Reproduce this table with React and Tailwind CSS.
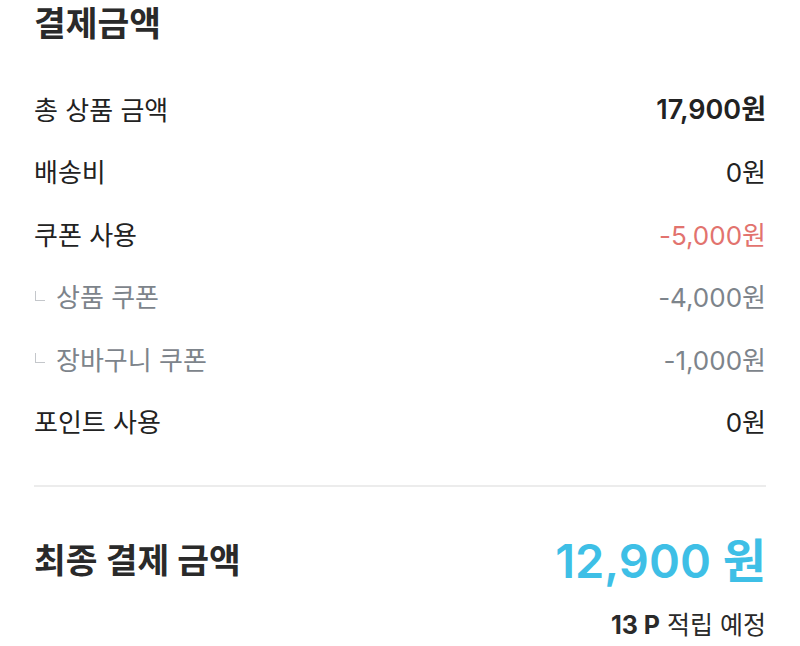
import React from "react";

const FONT = { fontFamily: "Inter, 'Noto Sans CJK KR', sans-serif" };

const ROWS = [
  { label: "총 상품 금액", value: "17,900원", valueClass: "text-[27px] font-semibold text-[#222222]" },
  { label: "배송비", value: "0원", valueClass: "text-[26px] text-[#222222]" },
  { label: "쿠폰 사용", value: "-5,000원", valueClass: "text-[26px] text-[#e2736e]" },
  { label: "상품 쿠폰", value: "-4,000원", valueClass: "text-[26px] text-[#7d848b]", sub: true },
  { label: "장바구니 쿠폰", value: "-1,000원", valueClass: "text-[26px] text-[#7d848b]", sub: true },
  { label: "포인트 사용", value: "0원", valueClass: "text-[26px] text-[#222222]" },
];

function Row({ label, value, valueClass, sub }) {
  return (
    <div className="flex h-[62.5px] items-center justify-between">
      <div className="flex items-center text-[26px]">
        {sub && (
          <span className="mr-[11px] mb-[4px] ml-[1px] h-[10px] w-[10px] border-b border-l border-[#c4c7cb]" />
        )}
        <span className={sub ? "text-[#7d848b]" : "text-[#222222]"}>{label}</span>
      </div>
      <span className={valueClass}>{value}</span>
    </div>
  );
}

export default function App() {
  return (
    <div className="h-[646px] w-[800px] bg-white px-[34px]" style={FONT}>
      <h1 className="h-[48px] text-[34.5px] font-bold leading-[48px] text-[#2a2a2a]">결제금액</h1>
      <div className="mt-[31px] flex flex-col">
        {ROWS.map((r) => (
          <Row key={r.label} {...r} />
        ))}
      </div>
      <div className="mt-[31px] h-[2px] bg-[#ececec]" />
      <div className="mt-[42px] flex h-[64px] items-center justify-between">
        <span className="text-[34.5px] font-bold text-[#2a2a2a]">최종 결제 금액</span>
        <span className="text-[47px] font-semibold text-[#3ebfe6]">12,900 원</span>
      </div>
      <div className="mt-[18px] flex h-[30px] items-center justify-end text-[25px] text-[#2a2a2a]">
        <span className="font-bold">13 P</span>
        <span className="ml-[7px]">적립 예정</span>
      </div>
    </div>
  );
}
